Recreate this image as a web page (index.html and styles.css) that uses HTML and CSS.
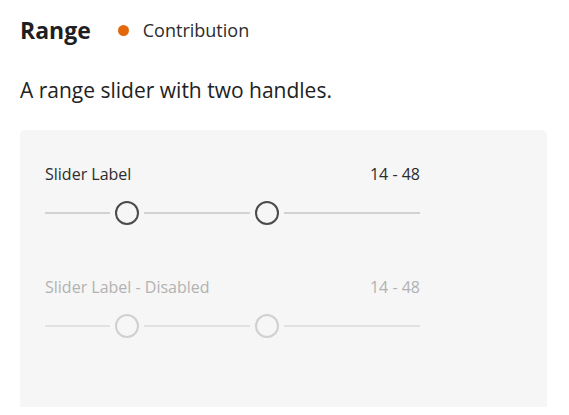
FILE: index.html
```html
<!DOCTYPE html>
<html>
<head>
<meta charset="utf-8">
<link rel="stylesheet" href="styles.css">
</head>
<body>
<div class="page">
  <div class="header">
    <h1 class="title">Range</h1>
    <span class="status"><span class="dot"></span>Contribution</span>
  </div>
  <p class="desc">A range slider with two handles.</p>
  <div class="panel">
    <div class="slider">
      <div class="slider-top">
        <span class="label">Slider Label</span>
        <span class="value">14 - 48</span>
      </div>
      <div class="track">
        <div class="seg" style="width:65px"></div>
        <div class="handle"></div>
        <div class="seg" style="width:106px"></div>
        <div class="handle"></div>
        <div class="seg seg-fill"></div>
      </div>
    </div>
    <div class="slider disabled">
      <div class="slider-top">
        <span class="label">Slider Label - Disabled</span>
        <span class="value">14 - 48</span>
      </div>
      <div class="track">
        <div class="seg" style="width:65px"></div>
        <div class="handle"></div>
        <div class="seg" style="width:106px"></div>
        <div class="handle"></div>
        <div class="seg seg-fill"></div>
      </div>
    </div>
  </div>
</div>
</body>
</html>
```
FILE: styles.css
```css
* { box-sizing: border-box; }
html, body { margin: 0; padding: 0; background: #ffffff; }
body {
  font-family: "Open Sans", "Liberation Sans", sans-serif;
  color: #222222;
}
.page {
  padding: 15px 20px 0 20px;
  width: 569px;
}
.header {
  display: flex;
  align-items: center;
  height: 30px;
}
.title {
  margin: 0;
  font-size: 23px;
  font-weight: 700;
  line-height: 30px;
  color: #1f1f1f;
}
.status {
  display: flex;
  align-items: center;
  margin-left: 27px;
  font-size: 18px;
  color: #2c2c2c;
}
.dot {
  width: 11px;
  height: 11px;
  border-radius: 50%;
  background: #e3680c;
  margin-right: 14px;
}
.desc {
  margin: 30px 0 0 0;
  font-size: 21px;
  line-height: 30px;
  color: #222222;
}
.panel {
  margin-top: 25px;
  width: 527px;
  height: 277px;
  background: #f6f6f6;
  border-radius: 5px 5px 0 0;
  padding: 34px 25px 0 25px;
  display: flex;
  flex-direction: column;
  gap: 52px;
}
.slider {
  width: 375px;
  display: flex;
  flex-direction: column;
  gap: 17px;
}
.slider-top {
  display: flex;
  justify-content: space-between;
  font-size: 16px;
  line-height: 20px;
  color: #2c2c2c;
}
.track {
  display: flex;
  align-items: center;
  height: 24px;
  gap: 5px;
}
.seg {
  height: 2px;
  background: #d2d2d2;
  flex: none;
}
.seg-fill { flex: 1; }
.handle {
  width: 24px;
  height: 24px;
  border-radius: 50%;
  border: 2px solid #4b4b4b;
  flex: none;
}
.disabled .slider-top { color: #b2b2b2; }
.disabled .seg { background: #e2e2e2; }
.disabled .handle { border-color: #d0d0d0; }
```
